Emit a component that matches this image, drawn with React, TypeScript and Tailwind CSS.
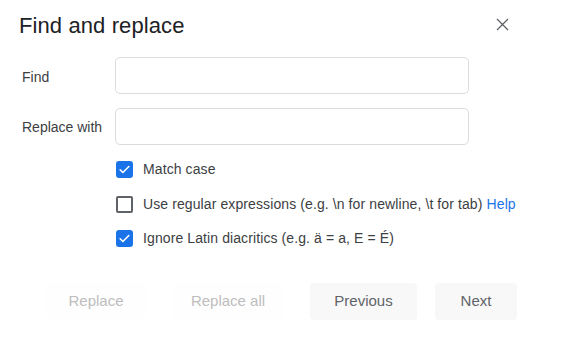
import React from "react";

function Check() {
  return (
    <svg width="13" height="13" viewBox="0 0 24 24" fill="none">
      <path d="M4 12.5l5 5L20 6.5" stroke="white" strokeWidth="3" strokeLinecap="round" strokeLinejoin="round" />
    </svg>
  );
}

function Box({ checked }: { checked: boolean }) {
  return checked ? (
    <div className="w-[17px] h-[17px] rounded-[3px] bg-[#1a73e8] flex items-center justify-center shrink-0">
      <Check />
    </div>
  ) : (
    <div className="w-[17px] h-[17px] rounded-[2px] border-2 border-[#5f6368] shrink-0" />
  );
}

export default function App() {
  return (
    <div
      className="w-[576px] h-[346px] bg-white text-[#202124] overflow-hidden"
      style={{ fontFamily: '"Liberation Sans", Arial, sans-serif' }}
    >
      <div className="h-[48px] flex items-center justify-between pl-[19px] pr-[67px] pt-[3px]">
        <div className="text-[22px] leading-[26px] text-[#202124] tracking-[0.1px]">Find and replace</div>
        <svg width="13" height="13" viewBox="0 0 13 13" className="mt-[-2px]">
          <path d="M1 1L12 12M12 1L1 12" stroke="#5f6368" strokeWidth="1.3" />
        </svg>
      </div>

      <div className="mt-[9px] flex items-center h-[37px]">
        <div className="w-[115px] pl-[22px] pt-[3px] text-[14px] text-[#3c4043]">Find</div>
        <div className="w-[354px] h-[37px] rounded-[5px] border border-[#dadce0]" />
      </div>
      <div className="mt-[14px] flex items-center h-[37px]">
        <div className="w-[115px] pl-[22px] pt-[2px] text-[14px] text-[#3c4043]">Replace with</div>
        <div className="w-[354px] h-[37px] rounded-[5px] border border-[#dadce0]" />
      </div>

      <div className="mt-[7px] pl-[116px] text-[14px] text-[#3c4043] tracking-[0.1px]">
        <div className="h-[35px] flex items-center gap-[10px]">
          <Box checked />
          <span>Match case</span>
        </div>
        <div className="h-[34px] flex items-center gap-[10px]">
          <Box checked={false} />
          <span>
            Use regular expressions (e.g. \n for newline, \t for tab){" "}
            <span className="text-[#1a73e8]">Help</span>
          </span>
        </div>
        <div className="h-[34px] flex items-center gap-[10px]">
          <Box checked />
          <span>Ignore Latin diacritics (e.g. ä = a, E = É)</span>
        </div>
      </div>

      <div className="mt-[28px] flex items-center pl-[46px] text-[15px]">
        <div className="w-[100px] h-[37px] rounded-[4px] bg-[#fefefe] flex items-center justify-center text-[#bdbdbd]">
          Replace
        </div>
        <div className="ml-[26px] w-[112px] h-[37px] rounded-[4px] bg-[#fefefe] flex items-center justify-center text-[#bdbdbd]">
          Replace all
        </div>
        <div className="ml-[26px] w-[107px] h-[37px] rounded-[4px] bg-[#f8f8f8] flex items-center justify-center text-[#5f6368]">
          Previous
        </div>
        <div className="ml-[18px] w-[82px] h-[37px] rounded-[4px] bg-[#f8f8f8] flex items-center justify-center text-[#5f6368]">
          Next
        </div>
      </div>
    </div>
  );
}
